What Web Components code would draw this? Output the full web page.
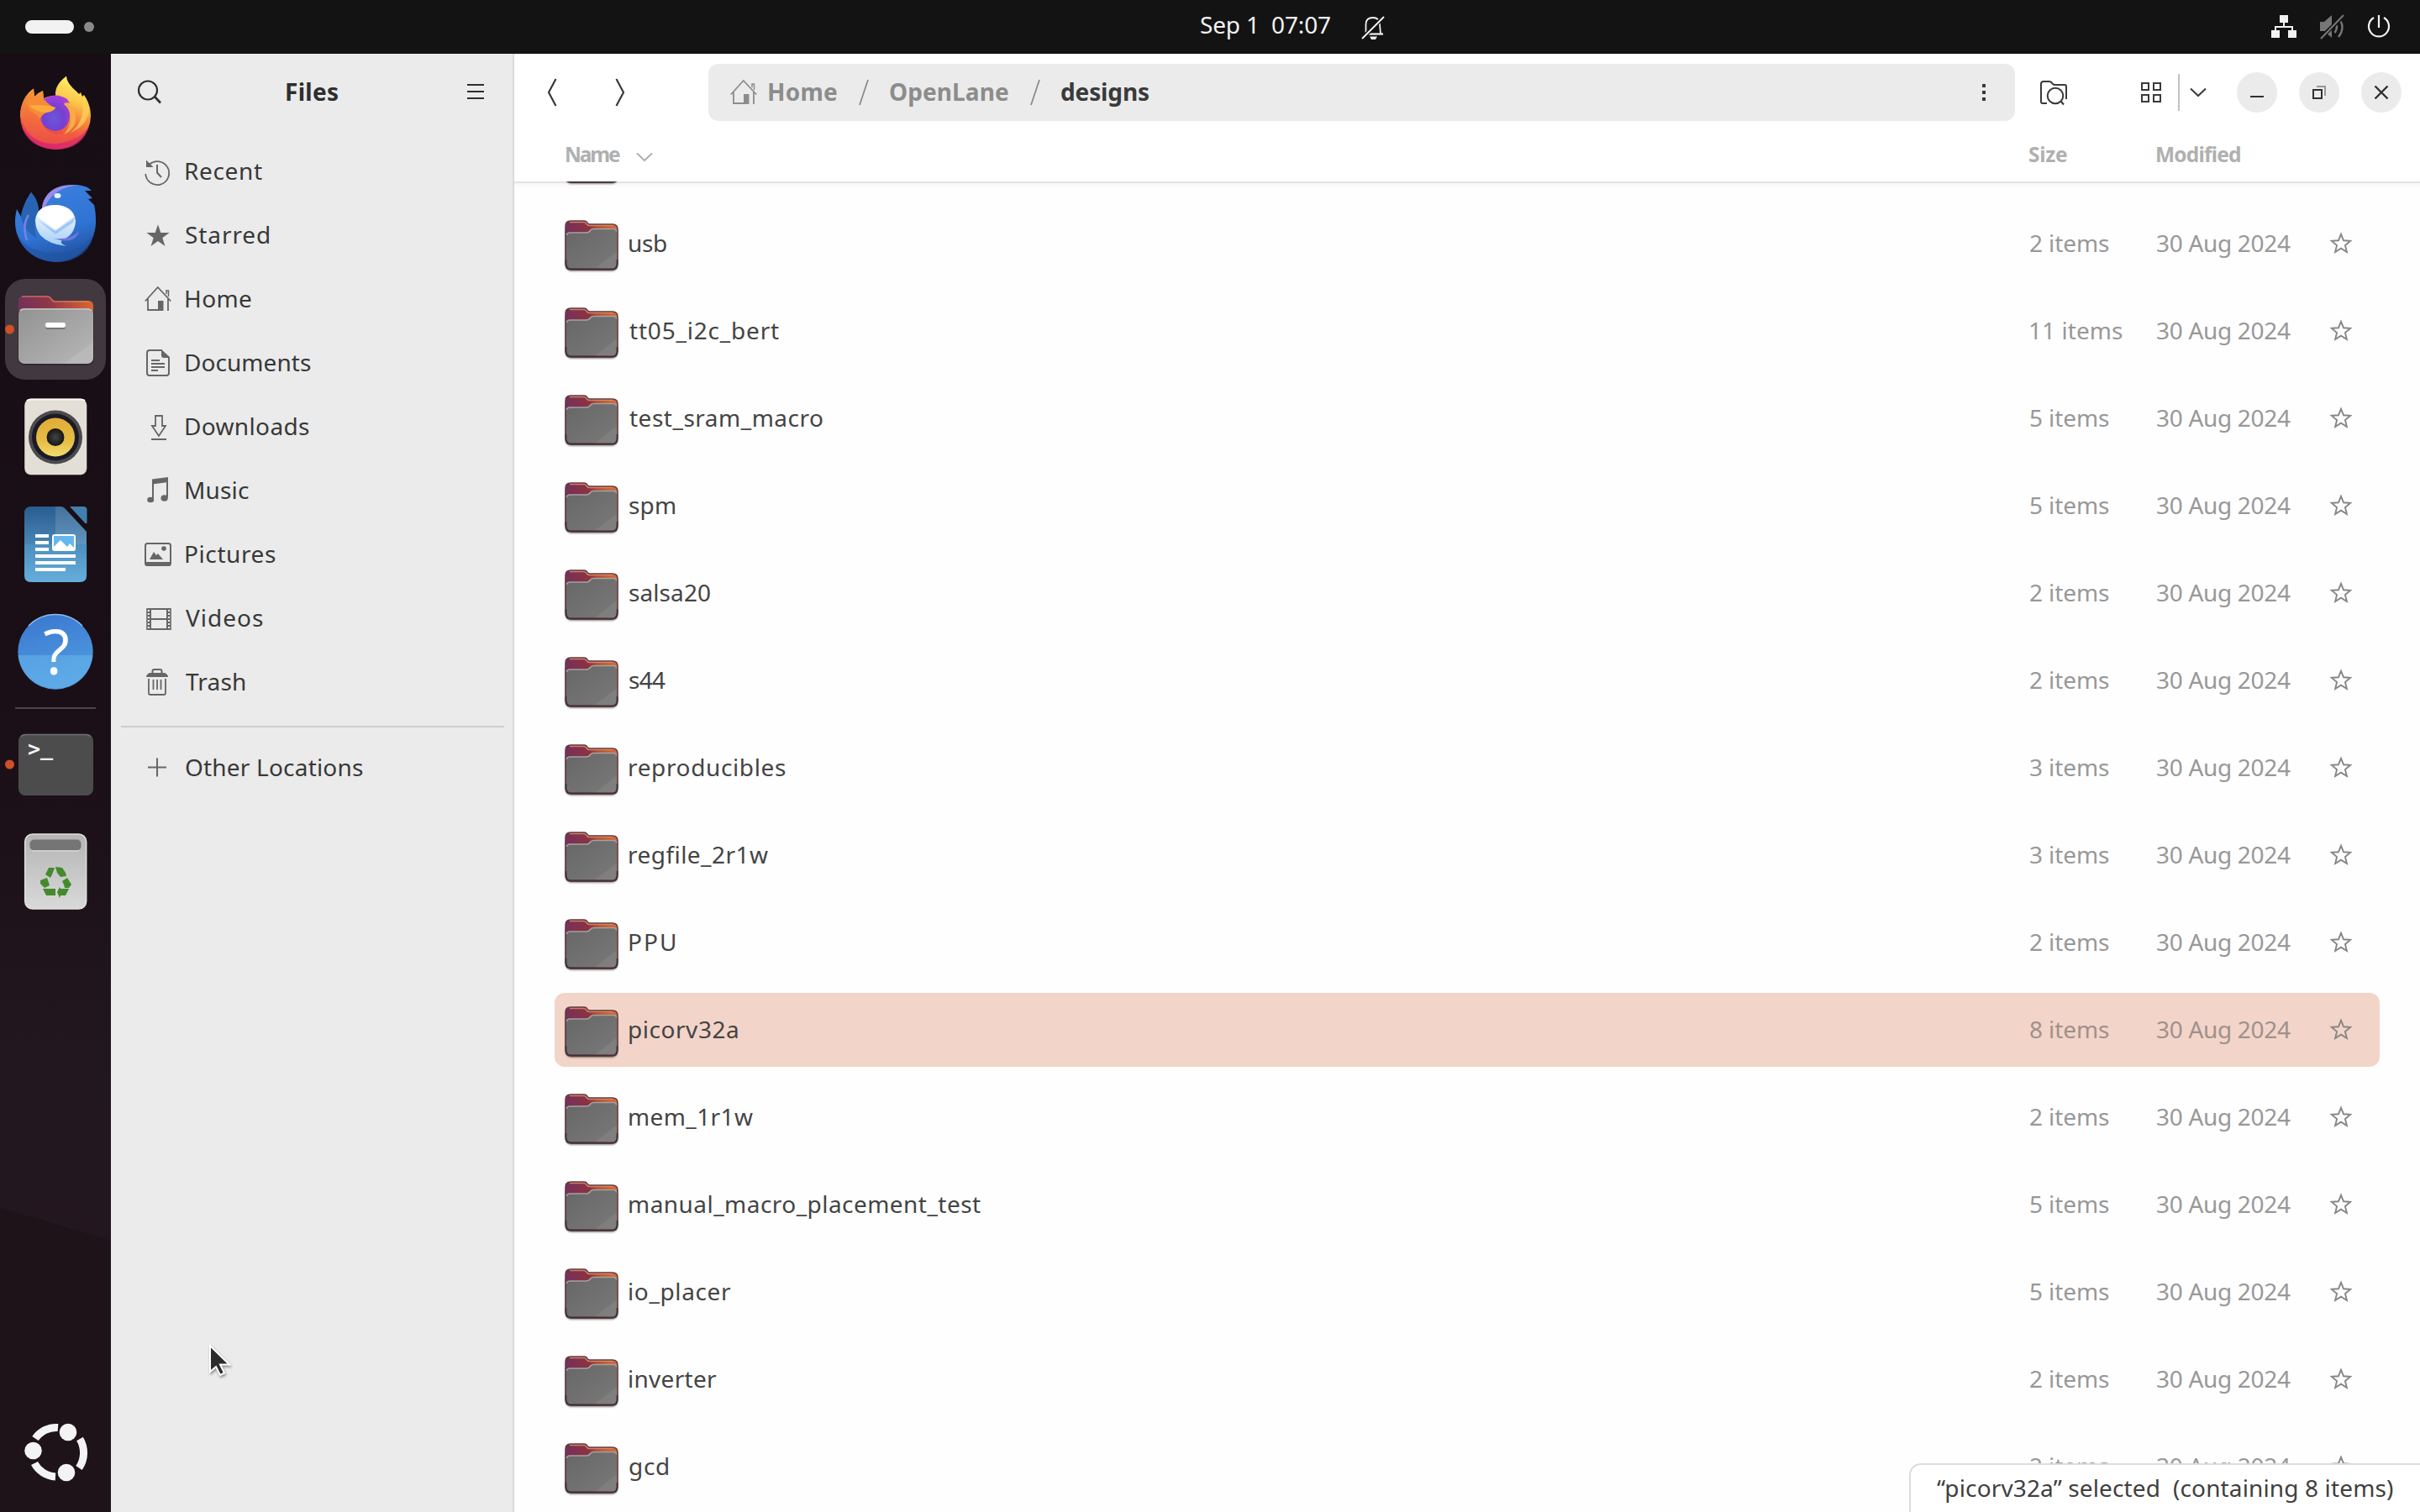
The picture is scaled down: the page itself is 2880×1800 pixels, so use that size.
<!DOCTYPE html>
<html lang="en">
<head>
<meta charset="utf-8">
<title>Files</title>
<style>
html,body{margin:0;padding:0;width:2880px;height:1800px;overflow:hidden;background:#fff}
body{font-family:"Noto Sans","Open Sans",sans-serif;font-size:28px}
</style>
</head>
<body>
<desk-shell></desk-shell>
<script>
const def=(name,css,html,after)=>customElements.define(name,class extends HTMLElement{
  connectedCallback(){
    if(this.shadowRoot)return;
    const r=this.attachShadow({mode:'open'});
    r.innerHTML='<style>'+css+'</style>'+(typeof html==='function'?html(this):html);
    if(after)after(this,r);
  }
});

/* Symbolic icons: [width, height, markup] */
const star=(cx,cy,R,r)=>{let p='';for(let i=0;i<10;i++){const a=-Math.PI/2+i*Math.PI/5,q=i%2?r:R;p+=(i?'L':'M')+(cx+q*Math.cos(a)).toFixed(2)+' '+(cy+q*Math.sin(a)).toFixed(2);}return p+'Z';};
const L='fill="none" stroke="currentColor"',W=L+' stroke-width="2"';
const ICONS={
  search:[32,32,`<circle cx="12" cy="13.500" r="11" ${L} stroke-width="2.200"/><path d="M19.500 20.500l7.500 8" ${L} stroke-width="2.600"/>`],
  menu:[20,20,`<path d="M0 2h20M0 10h20M0 18h20" ${W}/>`],
  recent:[32,32,`<path d="M6 7.500A14 14 0 1 1 1.200 19" ${L} stroke-width="1.800"/><path d="M2 2.500V11h8.500Z" fill="currentColor"/><path d="M15 8v9.500l5 5.500" ${W}/>`],
  starred:[32,32,`<path d="${star(16,17.5,14.3,5.6)}" fill="currentColor"/>`],
  home:[32,32,`<path d="M.8 18.500 15.800 2l15.400 16.500M4 16v13h13M28 16v14" ${L} stroke-width="1.800"/><path d="M26 10V6h2.500v7" ${L} stroke-width="1.500"/><path d="M16 18h6.500v12H16z" fill="currentColor"/>`],
  documents:[32,32,`<path d="M21 1H6Q3 1 3 4v24q0 3 3 3h20q3 0 3-3V9" ${W}/><path d="M20 0l10 9v1h-7q-3 0-3-3z" fill="currentColor"/><path d="M8 13h10M8 17h16M8 21h16M8 25h8" ${W}/>`],
  downloads:[32,32,`<path d="M13 3h8v12h4l-8 12-8-12h4zM8 31h18" ${L} stroke-width="1.800"/>`],
  music:[32,32,`<path d="M10 3v24M27 1v23" ${W}/><path d="M9 2.500 28 0v6L9 8.500z" fill="currentColor"/><ellipse cx="7.200" cy="27" rx="4" ry="3.300" fill="currentColor"/><ellipse cx="23.600" cy="25" rx="4.200" ry="3.800" fill="currentColor"/>`],
  pictures:[32,32,`<rect x="1" y="3" width="30" height="26" rx="2.500" ${W}/><path d="M1 25h30v3q0 2-2 2H3q-2 0-2-2z" fill="currentColor"/><path d="M6 22l5-9 3 4 2-2 6 7z" fill="currentColor"/><circle cx="23" cy="9" r="2.800" fill="currentColor"/>`],
  videos:[32,32,`<path d="M7 5h20v24H7zM7 17h20" ${W}/><path d="M3 4v26M31 4v26" ${L} stroke-width="1.600"/><path d="M5 4v26M29 4v26" ${L} stroke-width="3" stroke-dasharray="2 2"/>`],
  trash:[32,32,`<path d="M9.500 5V3q0-2 2-2h7q2 0 2 2v2" ${W}/><path d="M2 10q0-3 4-5h18q4 2 4 5z" fill="currentColor"/><path d="M5 12v17q0 2 2 2h16q2 0 2-2V12M10.500 13v12M15 13v12M19.500 13v12" ${L} stroke-width="1.800"/>`],
  plus:[32,32,`<path d="M15 4.500v22M4 15.500h22" ${W}/>`],
  back:[12,34,`<path d="M10.500 1 2 17l8.500 16" ${L} stroke-width="2.200"/>`],
  forward:[12,34,`<path d="M1.500 1 10 17 1.500 33" ${L} stroke-width="2.200"/>`],
  slash:[12,32,`<path d="M11 1 1 31" ${L} stroke-width="1.800"/>`],
  kebab:[4,20,`<path d="M0 0h4v4H0zM0 8h4v4H0zM0 16h4v4H0z" fill="currentColor"/>`],
  foldersearch:[36,32,`<path d="M12 29H7q-2 0-2-2V6q0-3 3-3h7q2 0 4 3 1 1 3 1h11q2 0 2 2v15" ${W}/><circle cx="22" cy="20" r="9.300" ${W}/><path d="M28.500 26.500l3.500 4" ${W}/>`],
  grid:[24,24,`<path d="M1 1h8v8H1zM15 1h8v8h-8zM1 15h8v8H1zM15 15h8v8h-8z" ${W}/>`],
  down:[20,12,`<path d="M1 1.500 10 10l9-8.500" ${W}/>`],
  min:[24,24,`<path d="M4 17h16" ${W}/>`],
  restore:[24,24,`<path d="M5 9h10v10H5z" ${W}/><path d="M9 5h10v11" ${W} opacity=".45"/>`],
  close:[24,24,`<path d="M4.500 4.500l15 15M19.500 4.500l-15 15" ${L} stroke-width="2.400"/>`],
  staroutline:[28,28,`<path d="${star(13,14.500,11.700,5.200)}" ${L} stroke-width="1.900"/>`],
  bell:[28,30,`<path d="M5.500 21V10q0-8 8.500-8 7.500 0 8 8l1 11" ${L} stroke-width="1.800"/><path d="M4 21.500h22" ${L} stroke-width="2.200"/><path d="M10 24.500h9l-2 3.500h-5z" fill="currentColor"/><path d="M1 27 26.500 1" stroke="#131313" stroke-width="5"/><path d="M1 27 27 1" ${W}/>`],
  network:[30,28,`<path d="M10 0h10v9H10zM0 18h10v9H0zM20 18h10v9H20z" fill="currentColor"/><path d="M15 8v6M5 19v-5h20v5" ${W}/>`],
  muted:[28,30,`<path d="M0 9h5l9-8v27l-9-8H0z" fill="currentColor"/><path d="M17.500 9q5 5.500 0 13M22 5q9 10 0 22" ${L} stroke-width="2.400"/><path d="M1 28 28 2" stroke="#131313" stroke-width="5"/><path d="M1 29 28 1" ${W}/>`],
  power:[28,28,`<path d="M8 3A12 12 0 1 0 20 3" ${L} stroke-width="2.200"/><path d="M14 0v15" ${L} stroke-width="2.200"/>`],
  folder:[68,68,`<defs><linearGradient id="b"><stop offset="0" stop-color="#76305a"/><stop offset=".45" stop-color="#8c3340"/><stop offset=".6" stop-color="#b04b32"/><stop offset="1" stop-color="#dd6a35"/></linearGradient><linearGradient id="f" x1="0" y1="0" x2="1" y2="1"><stop offset="0" stop-color="#676767"/><stop offset=".78" stop-color="#757575"/><stop offset=".79" stop-color="#7e7e7e"/><stop offset="1" stop-color="#808080"/></linearGradient><filter id="s" x="-.2" y="-.2" width="1.400" height="1.400"><feGaussianBlur stdDeviation="1.300"/></filter></defs><rect x="3" y="10" width="62" height="54" rx="7" fill="#000" opacity=".45" filter="url(#s)"/><path d="M3 55V10q0-6 6-6h16q3 0 4 2.500Q30 8 32 8h27q6 0 6 6v41q0 7-6 7H9q-6 0-6-7z" fill="url(#b)" stroke="#5b3a42" stroke-width="1.500"/><path d="M8 5.500h17q2 0 3.500 2.500 1 1.500 3 1.500h28" fill="none" stroke="#e0926c" stroke-width="1.600" opacity=".8"/><path d="M4 55V21q0-3 4-3h19q4 0 6-3 1-1.500 4-1.500h23q4 0 4 4v37q0 6-5 6H9q-5 0-5-6z" fill="url(#f)"/><path d="M4.500 21q0-3 4-3H27q4 0 6-3 1-1.500 4-1.500h23q3.500 0 3.500 3" fill="none" stroke="#a2a2a2" stroke-width="1.500"/><path d="M3.500 50v4q0 7.500 6 7.500h49q6 0 6-7.500v-4" fill="none" stroke="#403439" stroke-width="1.800"/>`]
};
def('sym-icon',':host{display:block;flex:none;line-height:0}svg{display:block;overflow:visible}',
  h=>{const [w,t,m]=ICONS[h.getAttribute('name')];return `<svg width="${w}" height="${t}" viewBox="0 0 ${w} ${t}">${m}</svg>`;});

/* One-line label whose inked width is set by tracking */
const ctx=document.createElement('canvas').getContext('2d');
def('fit-label',':host{display:block;flex:none;white-space:pre;line-height:38px}span{display:block}','<span><slot></slot></span>',
  (h,r)=>{
    const t=h.textContent,cs=getComputedStyle(h),w=+h.getAttribute('w');
    ctx.font=`${cs.fontWeight} ${cs.fontSize} ${cs.fontFamily}`;
    const m=ctx.measureText(t),ink=m.actualBoundingBoxRight+m.actualBoundingBoxLeft;
    const s=r.querySelector('span');
    s.style.letterSpacing=((w-ink)/(t.length-1)).toFixed(3)+'px';
    s.style.marginLeft=m.actualBoundingBoxLeft.toFixed(2)+'px';
    h.style.width=w+'px';
  });

def('top-bar',`:host{display:flex;align-items:center;height:64px;background:#131313;color:#f2f2f2;box-sizing:border-box;padding:0 35px 0 30px}
.pill{width:58px;height:16px;border-radius:8px;background:#f2f2f2}
.dot{width:12px;height:12px;border-radius:50%;background:#8a8a8a;margin-left:12px}
.clock{margin-left:1317px;padding-bottom:7px}
.bell{margin:4px 0 0 37px}
.tray{margin-left:auto;display:flex;align-items:center;gap:28px;padding-bottom:1px}
.muted{color:#777}`,
`<div class="pill"></div><div class="dot"></div><fit-label class="clock" w="154">Sep 1  07:07</fit-label><sym-icon class="bell" name="bell"></sym-icon>
<div class="tray"><sym-icon name="network"></sym-icon><sym-icon class="muted" name="muted"></sym-icon><sym-icon name="power"></sym-icon></div>`);

/* Dock artwork; each drawing uses the desktop's own vertical coordinates */
const ART={
firefox:[72,`<defs><linearGradient id="a" x1=".75" y1="0" x2=".4" y2="1"><stop offset="0" stop-color="#fff36a"/><stop offset=".3" stop-color="#fbc94b"/><stop offset=".5" stop-color="#f78a3c"/><stop offset=".75" stop-color="#f0503f"/><stop offset="1" stop-color="#d92a6c"/></linearGradient><radialGradient id="p" cx=".45" cy=".65" r=".7"><stop offset="0" stop-color="#6a58dd"/><stop offset=".5" stop-color="#7440cf"/><stop offset="1" stop-color="#b23fdd"/></radialGradient><linearGradient id="q" x1="0" y1="0" x2="0" y2="1"><stop offset="0" stop-color="#f59335"/><stop offset="1" stop-color="#ef5145"/></linearGradient></defs>
<path d="M66 114C65 103 72 96 79 90.500 80 101 88 105 94 112L96 110 98 115 100 113C106 122 108 130 108 138A42 40 0 0 1 24 138C24 124 31 111 40 105.500L41 115Q46 110 51 108L52 117Q58 114 66 114Z" fill="url(#a)"/>
<path d="M24 138C24 124 31 111 40 105.500L41 115Q46 110 51 108L52 117 60 124 49 140Q50 155 66 160 84 161 93 145 94 168 66 172 34 172 24 138Z" fill="url(#q)" opacity=".85"/>
<path d="M25 148Q34 170 66 171 97 169 107 147 100 178 66 178 32 176 25 148Z" fill="#d92a6c" opacity=".65"/>
<path d="M52 118Q66 109 80 118L83 123Q78 121 76 124 84 130 83 139 81 155 66 156 50 154 48 140 48 126 52 118Z" fill="url(#p)"/>
<path d="M76 122Q94 129 89 148 84 157 76 160 87 147 83 134 81 127 76 122Z" fill="#f8ac43"/>
<path d="M97 115Q104 141 84 158 103 150 106 132 103 120 97 115Z" fill="#fbd35b" opacity=".7"/>
<path d="M30 120Q42 113 53 119 59 126 66 128 64 133 55 134 49 137 48 142 44 136 36 132Z" fill="#f58c36"/><path d="M35 126Q48 123 66 128 65 132 55 134 44 134 35 126Z" fill="#fbab3c"/>`],
thunderbird:[200,`<defs><linearGradient id="t" x1=".3" y1="0" x2=".6" y2="1"><stop offset="0" stop-color="#3c7fdd"/><stop offset=".6" stop-color="#2f74d4"/><stop offset="1" stop-color="#214f9e"/></linearGradient><linearGradient id="e" x1="0" y1="0" x2="0" y2="1"><stop offset="0" stop-color="#fff"/><stop offset="1" stop-color="#a5cdf6"/></linearGradient></defs>
<path d="M50 248C52 230 66 219 88 220 98 220 104 222 109 227L101 227 110 236 105 237 112 244C114 252 114 260 114 266 113 292 92 312 66 312 38 311 18 290 18 264 18 258 19 253 20 249L25 258C27 245 33 235 37 229 43 236 46 243 46 253Z" fill="url(#t)"/>
<path d="M25 258C27 245 33 235 37 229 43 236 46 243 46 253Q38 266 44 284 28 274 25 258Z" fill="#2764b4"/>
<path d="M50 248C52 230 66 219 92 220.500 68 223 58 236 54 246Z" fill="#9b8be8"/>
<path d="M19 272Q25 300 66 301 105 299 113 272 108 312 66 312 26 308 19 272Z" fill="#1f53a2" opacity=".55"/>
<path d="M34 256Q26 268 32 286" fill="none" stroke="#7b80e6" stroke-width="2.500"/>
<path d="M42 262Q44 244 66 244 88 245 90 263 89 279 76 285 68 288 79 293 58 291 48 280 42 272 42 262Z" fill="url(#e)"/>
<path d="M44 261 66 275 89 259 87 265 66 279Z" fill="#8dbdf0" opacity=".75"/><path d="M45 258Q49 245 66 244 82 245 88 257L68 272.500Q66 274 64 272.500Z" fill="#fff"/>
<path d="M64 284Q84 286 94 275 90 292 64 284Z" fill="#6a76de"/><ellipse cx="68.500" cy="233" rx="4" ry="3" fill="#e8f6ff"/>`],
files:[328,`<defs><linearGradient id="a"><stop offset="0" stop-color="#76305a"/><stop offset=".4" stop-color="#8e3748"/><stop offset="1" stop-color="#df6430"/></linearGradient><linearGradient id="g" x1="0" y1="0" x2="1" y2="1"><stop offset="0" stop-color="#929292"/><stop offset=".8" stop-color="#b0b0b0"/><stop offset=".81" stop-color="#b8b8b8"/><stop offset="1" stop-color="#bababa"/></linearGradient></defs><rect x="6" y="332" width="120" height="120" rx="24" fill="#42383f"/><path d="M22 425V358q0-6 6-6h28q3 0 5 3t5 3h39q6 0 6 6v61z" fill="url(#a)"/><path d="M26 353h31q2 0 4 3t5 3h40" fill="none" stroke="#e9936f" stroke-width="1.500" opacity=".6"/><rect x="21" y="367" width="91" height="68" rx="8" fill="#000" opacity=".25"/><rect x="22" y="367" width="89" height="66" rx="7" fill="url(#g)"/><path d="M24 370q1-2 5-2h75q4 0 5 2" fill="none" stroke="#c4c4c4" stroke-width="1.500"/><rect x="54" y="385" width="24" height="7" rx="2.500" fill="#777"/><rect x="54" y="384" width="24" height="6" rx="2.500" fill="#fff"/><circle cx="11.500" cy="392" r="5.500" fill="#cf5128"/>`],
rhythmbox:[456,`<defs><linearGradient id="y" x1="0" y1="0" x2="0" y2="1"><stop offset="0" stop-color="#e0ac38"/><stop offset=".6" stop-color="#e6bd44"/><stop offset="1" stop-color="#f3dc70"/></linearGradient><radialGradient id="k"><stop offset="0" stop-color="#444"/><stop offset="1" stop-color="#151515"/></radialGradient></defs><rect x="29" y="474.500" width="74.500" height="91" rx="8" fill="#e3dfd7" stroke="#0006" stroke-width="1"/><path d="M32 477q2-1.500 5-1.500h59q3 0 5 1.500" stroke="#fbfaf6" stroke-width="2" fill="none"/><circle cx="66" cy="520.500" r="32" fill="#4b4b4d"/><circle cx="66" cy="520.500" r="28" fill="#1b1a26"/><circle cx="66" cy="520.500" r="23" fill="url(#y)"/><circle cx="66" cy="520.500" r="10.500" fill="url(#k)"/>`],
writer:[584,`<defs><linearGradient id="w" x1="0" y1="0" x2="0" y2="1"><stop offset="0" stop-color="#295d8f"/><stop offset="1" stop-color="#68aedb"/></linearGradient></defs><path d="M37 603h35q3 0 5 2l26 28v52q0 8-8 8H37q-8 0-8-8v-74q0-8 8-8z" fill="url(#w)"/><path d="M66 603h6q3 0 5 2l26 28v15H66z" fill="#fff" opacity=".13"/><path d="M29 648h74.500v37q0 8-8 8H37q-8 0-8-8z" fill="#5ab0e0" opacity=".22"/><path d="M83 603h16.500q4 0 4 4v16h-2z" fill="#4180ad"/><path d="M42 638h16M42 646h16M42 654h16M42 662h48M42 670h48M42 678h36" stroke="#fff" stroke-width="4"/><rect x="62" y="636" width="28" height="20" rx="3" fill="#fff"/><path d="M64 638h24v14l-5-5-3 4-8-8-8 8z" fill="#66b7ee"/>`],
help:[712,`<defs><linearGradient id="h" x1="0" y1="0" x2=".3" y2="1"><stop offset="0" stop-color="#3a76cf"/><stop offset="1" stop-color="#4f9ce0"/></linearGradient></defs><circle cx="66" cy="776" r="44.700" fill="url(#h)"/><path d="M21.300 780a45 45 0 0 0 89.400 0z" fill="#6cb8ee" opacity=".5"/><path d="M34 745a44.500 44.500 0 0 1 64 0" fill="none" stroke="#8cb9ee" stroke-width="1.500"/><text x="67" y="803" text-anchor="middle" font-size="73" font-family="Open Sans,Noto Sans,sans-serif" fill="#fff">?</text>`],
terminal:[846,`<rect x="22" y="874" width="89" height="73" rx="8" fill="#4c4c4c"/><path d="M25 877q2-2.500 6-2.500h71q4 0 6 2.500" fill="none" stroke="#707070" stroke-width="1.600"/><text x="33" y="900" font-size="25" font-weight="700" font-family="DejaVu Sans Mono,monospace" fill="#f4f4f4">&gt;<tspan x="48" y="899">_</tspan></text><circle cx="11.500" cy="910" r="5.500" fill="#cf5128"/>`],
trash:[974,`<defs><linearGradient id="c" x1="0" y1="0" x2="0" y2="1"><stop offset="0" stop-color="#b4b4b4"/><stop offset="1" stop-color="#d9d9d9"/></linearGradient></defs><rect x="29.700" y="993" width="73" height="89" rx="9" fill="url(#c)" stroke="#e0e0e0" stroke-width="1.500"/><rect x="35.500" y="999.500" width="61" height="13" rx="5" fill="#757575"/><path d="M38 1013h56" stroke="#d8d8d8" stroke-width="1.500"/><g fill="#438a2c"><path d="M58 1033h7l-3 8-2 4-6-4z"/><path d="M66 1032l8 1 4 6 1 4-7 1-4-5z"/><path d="M48 1048l8-3 3 9-4 2-2 1-5-5z"/><path d="M74 1049l6-4 5 8-3 4h-5l-1-4z"/><path d="M51 1058h15v8H55z"/><path d="M68 1062l3-6 1 2h10l-4 8h-6l-1 3z"/></g>`],
ubuntu:[1665,`<g fill="none" stroke="#f3f3f3" stroke-width="9"><path d="M42 1712.500A30 30 0 0 1 69 1699.500"/><path d="M95 1713A32 32 0 0 1 94 1747.500"/><path d="M66 1758A30 30 0 0 1 41 1742"/></g><g fill="#f3f3f3"><circle cx="81" cy="1705" r="10.300"/><circle cx="39.500" cy="1727" r="10.300"/><circle cx="79" cy="1753" r="10.300"/></g>`]
};
def('dock-item',':host{display:block;flex:none;height:128px}svg{display:block}',
  h=>{const [y,m]=ART[h.getAttribute('app')];return `<svg width="132" height="128" viewBox="0 ${y} 132 128">${m}</svg>`;});
def('app-dock',`:host{display:flex;flex-direction:column;box-sizing:border-box;width:132px;padding:8px 0 7px;background:linear-gradient(#170d15,#1a0f16 45%,#22161f 70%,#24161f)}
:host{position:relative;z-index:0}
.shade{position:absolute;z-index:-1;left:0;top:1374px;width:132px;height:362px;background:#1d1318;clip-path:polygon(0 0,100% 39px,100% 100%,0 100%)}
.rule{flex:none;height:2px;margin:2px 18px;background:#4c4549}.gap{flex:1}`,
`<div class="shade"></div>${['firefox','thunderbird','files','rhythmbox','writer','help'].map(a=>`<dock-item app="${a}"></dock-item>`).join('')}
<div class="rule"></div><dock-item app="terminal"></dock-item><dock-item app="trash"></dock-item><div class="gap"></div><dock-item app="ubuntu"></dock-item>`);

def('place-item',':host{display:flex;align-items:center;height:76px;padding-left:40px;color:#383838}sym-icon{color:#666;margin-right:17px}.t{padding-bottom:3px}',
  h=>`<sym-icon name="${h.getAttribute('icon')}"></sym-icon><fit-label class="t" w="${h.getAttribute('w')}">${h.getAttribute('label')}</fit-label>`);
def('side-bar',`:host{display:block;box-sizing:border-box;width:480px;background:#ebebeb;border-right:2px solid #dadada;color:#2e2e2e}
.head{display:flex;align-items:center;height:92px;padding:0 34px 0 32px;margin-bottom:10px}
.head fit-label{font-weight:700;margin-left:145px;padding-bottom:2px}.menu{margin-left:auto;padding-bottom:3px}
hr{border:0;height:2px;margin:14px 10px 10px 12px;background:#cdcdcd}`,
`<div class="head"><sym-icon name="search"></sym-icon><fit-label w="61">Files</fit-label><sym-icon class="menu" name="menu"></sym-icon></div>
${[['recent','Recent',91],['starred','Starred',99],['home','Home',78],['documents','Documents',149],['downloads','Downloads',147],['music','Music',75],['pictures','Pictures',107],['videos','Videos',92],['trash','Trash',71]].map(([i,t,w])=>`<place-item icon="${i}" label="${t}" w="${w}"></place-item>`).join('')}
<hr><place-item icon="plus" label="Other Locations" w="211"></place-item>`);

def('path-bar',`:host{display:flex;align-items:center;box-sizing:border-box;width:1555px;height:68px;padding:0 35px 0 26px;border-radius:12px;background:#ebebeb;color:#8c8c8c;font-weight:700}
fit-label{padding-bottom:2px}.h{margin-right:14px}.s{margin:0 25.500px}.cur,.k{color:#3a3a3a}.k{margin-left:auto;padding-bottom:1px}`,
`<sym-icon class="h" name="home"></sym-icon><fit-label w="81">Home</fit-label><sym-icon class="s" name="slash"></sym-icon><fit-label w="141">OpenLane</fit-label><sym-icon class="s" name="slash"></sym-icon><fit-label class="cur" w="104">designs</fit-label><sym-icon class="k" name="kebab"></sym-icon>`);
def('round-button',':host{display:flex;align-items:center;justify-content:center;width:48px;height:48px;border-radius:50%;background:#ebebeb;color:#303030}',
  h=>`<sym-icon name="${h.getAttribute('icon')}"></sym-icon>`);
def('header-bar',`:host{display:flex;align-items:center;height:92px;padding:0 22px 0 39px;color:#3a3a3a}
.fw{margin-left:69px}path-bar{margin-left:99px}.fs{margin-left:26px}.gr{margin-left:88px}
.v{width:2px;height:44px;background:#c2c2c2;margin:0 12px 0 20px}.win{display:flex;gap:26px;margin-left:auto}`,
`<sym-icon name="back"></sym-icon><sym-icon class="fw" name="forward"></sym-icon><path-bar></path-bar><sym-icon class="fs" name="foldersearch"></sym-icon><sym-icon class="gr" name="grid"></sym-icon><div class="v"></div><sym-icon name="down"></sym-icon>
<div class="win"><round-button icon="min"></round-button><round-button icon="restore"></round-button><round-button icon="close"></round-button></div>`);

const COLS='grid-template-columns:1fr 151px 206px 59px';
def('column-head',`:host{display:grid;${COLS};align-items:center;height:60px;margin:0 48px;padding-left:14px;font-size:24.500px;font-weight:700;color:#b0b0b0;box-sizing:border-box}
fit-label{padding-bottom:5px}.n{display:flex;align-items:center;gap:19px}.n sym-icon{padding-top:2px}.sz{margin-left:-1px}`,
`<div class="n"><fit-label w="64">Name</fit-label><sym-icon name="down"></sym-icon></div><fit-label class="sz" w="45">Size</fit-label><fit-label w="99">Modified</fit-label>`);
def('file-row',`:host{display:grid;${COLS};align-items:center;height:88px;padding-left:10px;border-radius:12px;color:#444;box-sizing:border-box}
:host([selected]){background:#f3d4c9}
:host([selected]) .m{color:#9f918c}.n{display:flex;align-items:center}.n sym-icon{margin:5px 11px 0 0}.m{color:#989898}fit-label{padding-bottom:2px}.st{color:#858585}`,
  h=>{const a=k=>h.getAttribute(k);
    if(!a('label'))return '<div class="n"><sym-icon name="folder"></sym-icon></div>';
    return `<div class="n"><sym-icon name="folder"></sym-icon><fit-label w="${a('w')}">${a('label')}</fit-label></div><fit-label class="m" w="${a('items')==='11'?110:94}">${a('items')} items</fit-label><fit-label class="m" w="159">30 Aug 2024</fit-label><sym-icon class="st" name="staroutline"></sym-icon>`;});
def('file-list',`:host{display:flex;flex-direction:column;gap:16px;flex:1;min-height:0;overflow:hidden;padding:0 48px;background:linear-gradient(#e4e4e4 0 2px,#f6f6f6 2px,#fbfbfb 5px,#fefefe 9px)}
file-row{flex:none}.first{margin-top:-74px}`,
`<file-row class="first"></file-row>`+[['usb',44,2],['tt05_i2c_bert',178,11],['test_sram_macro',230,5],['spm',54,5],['salsa20',96,2],['s44',43,2],['reproducibles',186,3],['regfile_2r1w',165,3],['PPU',54,2],['picorv32a',129,8],['mem_1r1w',147,2],['manual_macro_placement_test',418,5],['io_placer',121,5],['inverter',104,2],['gcd',46,2]].map(([t,w,n])=>`<file-row label="${t}" w="${w}" items="${n}"${t==='picorv32a'?' selected':''}></file-row>`).join(''));
def('status-toast',':host{display:block;position:absolute;right:0;bottom:0;box-sizing:border-box;width:608px;height:58px;padding:8px 0 0 31px;border:2px solid #dcdcdc;border-width:2px 0 0 2px;border-radius:14px 0 0 0;background:#fff;color:#404040}',
'<fit-label w="543">“picorv32a” selected  (containing 8 items)</fit-label>');
def('file-pane',':host{display:flex;flex-direction:column;flex:1;position:relative;background:#fff;overflow:hidden}','<header-bar></header-bar><column-head></column-head><file-list></file-list><status-toast></status-toast>');
def('mouse-pointer',':host{display:block;position:absolute;left:246px;top:1598px}svg{display:block;filter:drop-shadow(1px 2px 1.500px #0006)}',
'<svg width="32" height="46" viewBox="0 0 32 46"><path d="M4 4v31l7-6 5 10 5-2.500-5-10H27z" fill="#2b2b2b" stroke="#fff" stroke-width="2"/></svg>');
def('desk-shell',':host{display:flex;flex-direction:column;position:relative;width:2880px;height:1800px;overflow:hidden}main{display:flex;flex:1;min-height:0}',
'<top-bar></top-bar><main><app-dock></app-dock><side-bar></side-bar><file-pane></file-pane></main><mouse-pointer></mouse-pointer>');
</script>
</body>
</html>
